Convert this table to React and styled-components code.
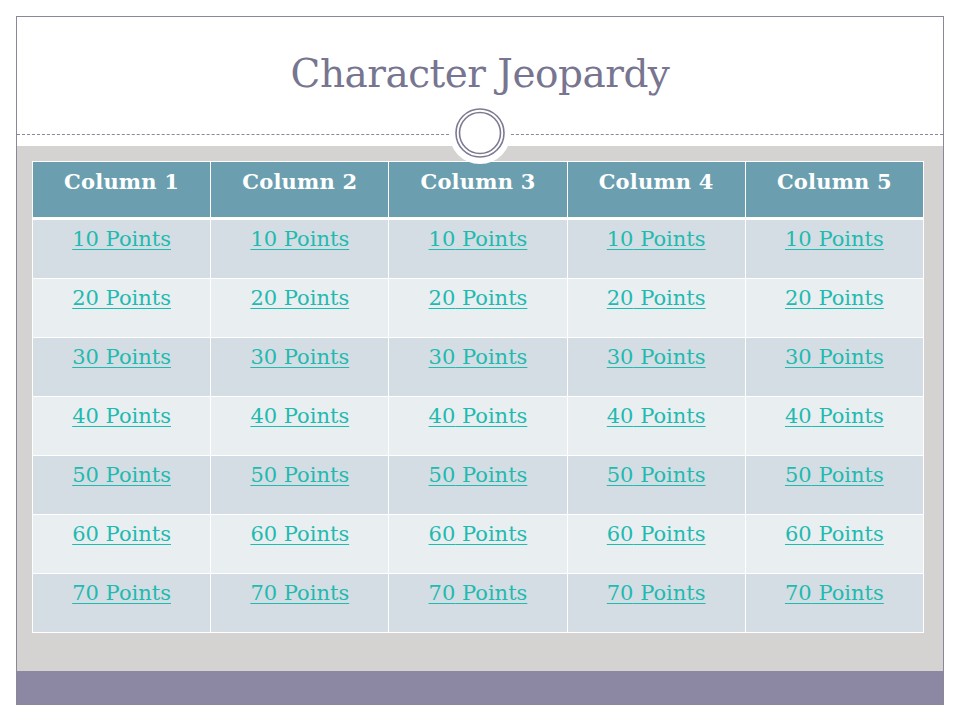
import React from "react";
import styled, { createGlobalStyle } from "styled-components";

const Global = createGlobalStyle`
  html, body { margin: 0; padding: 0; background: #ffffff; }
  body { font-family: "DejaVu Serif", "Liberation Serif", serif; }
`;

const Frame = styled.div`
  position: relative;
  box-sizing: border-box;
  margin: 16px 0 0 16px;
  width: 928px;
  height: 689px;
  border: 1px solid #8a8898;
  display: flex;
  flex-direction: column;
  background: #ffffff;
`;

const TitleBar = styled.header`
  height: 117px;
  display: flex;
  align-items: flex-start;
  justify-content: center;
  border-bottom: 1px dashed #8a8898;
`;

const Title = styled.h1`
  margin: 34px 0 0 0;
  font-family: "DejaVu Serif", serif;
  font-weight: normal;
  font-size: 39px;
  line-height: 46px;
  color: #777590;
  letter-spacing: -0.5px;
`;

const Spacer = styled.div`
  height: 11px;
`;

const Stage = styled.main`
  flex: 1;
  background: #d4d3d2;
  padding: 15px 0 0 15px;
`;

const Board = styled.table`
  width: 892px;
  border-collapse: collapse;
  border: 1px solid #ffffff;
  table-layout: fixed;

  tbody tr:first-child td {
    height: 60px;
  }
`;

const HeadCell = styled.th`
  height: 57px;
  padding: 9px 0 0;
  box-sizing: border-box;
  vertical-align: top;
  background: #6b9fb0;
  color: #ffffff;
  font-family: "DejaVu Serif", serif;
  font-weight: bold;
  font-size: 21px;
  line-height: 21px;
  letter-spacing: 0.2px;
  border: 1px solid #ffffff;
  border-bottom: 3px solid #ffffff;
`;

const Cell = styled.td`
  height: 59px;
  padding: 9px 0 0;
  box-sizing: border-box;
  vertical-align: top;
  text-align: center;
  line-height: 21px;
  background: ${(p) => (p.$alt ? "#e9eef1" : "#d3dde3")};
  border: 1px solid #ffffff;
`;

const PointLink = styled.a`
  font-family: "DejaVu Serif", serif;
  font-size: 21px;
  color: #1fbab0;
  text-decoration: underline;
  text-decoration-thickness: 1px;
  text-underline-offset: 3px;
`;

const Footer = styled.footer`
  height: 33px;
  background: #8c88a4;
`;

const Medallion = styled.div`
  position: absolute;
  left: ${480 - 17 - 31}px;
  top: ${133 - 17 - 31}px;
  width: 62px;
  height: 62px;
  border-radius: 50%;
  background: #ffffff;
  display: flex;
  align-items: center;
  justify-content: center;
`;

const columns = ["Column 1", "Column 2", "Column 3", "Column 4", "Column 5"];
const points = [10, 20, 30, 40, 50, 60, 70];

export default function App() {
  return (
    <>
      <Global />
      <Frame>
        <TitleBar>
          <Title>Character Jeopardy</Title>
        </TitleBar>
        <Spacer />
        <Stage>
          <Board>
            <thead>
              <tr>
                {columns.map((c) => (
                  <HeadCell key={c}>{c}</HeadCell>
                ))}
              </tr>
            </thead>
            <tbody>
              {points.map((p, i) => (
                <tr key={p}>
                  {columns.map((c) => (
                    <Cell key={c} $alt={i % 2 === 1}>
                      <PointLink href="#">{p} Points</PointLink>
                    </Cell>
                  ))}
                </tr>
              ))}
            </tbody>
          </Board>
        </Stage>
        <Footer />
        <Medallion>
          <svg width="52" height="52" viewBox="0 0 52 52">
            <circle cx="26" cy="26" r="24" fill="none" stroke="#7c7a92" strokeWidth="1.6" />
            <circle cx="26" cy="26" r="20.5" fill="none" stroke="#7c7a92" strokeWidth="1.6" />
          </svg>
        </Medallion>
      </Frame>
    </>
  );
}
